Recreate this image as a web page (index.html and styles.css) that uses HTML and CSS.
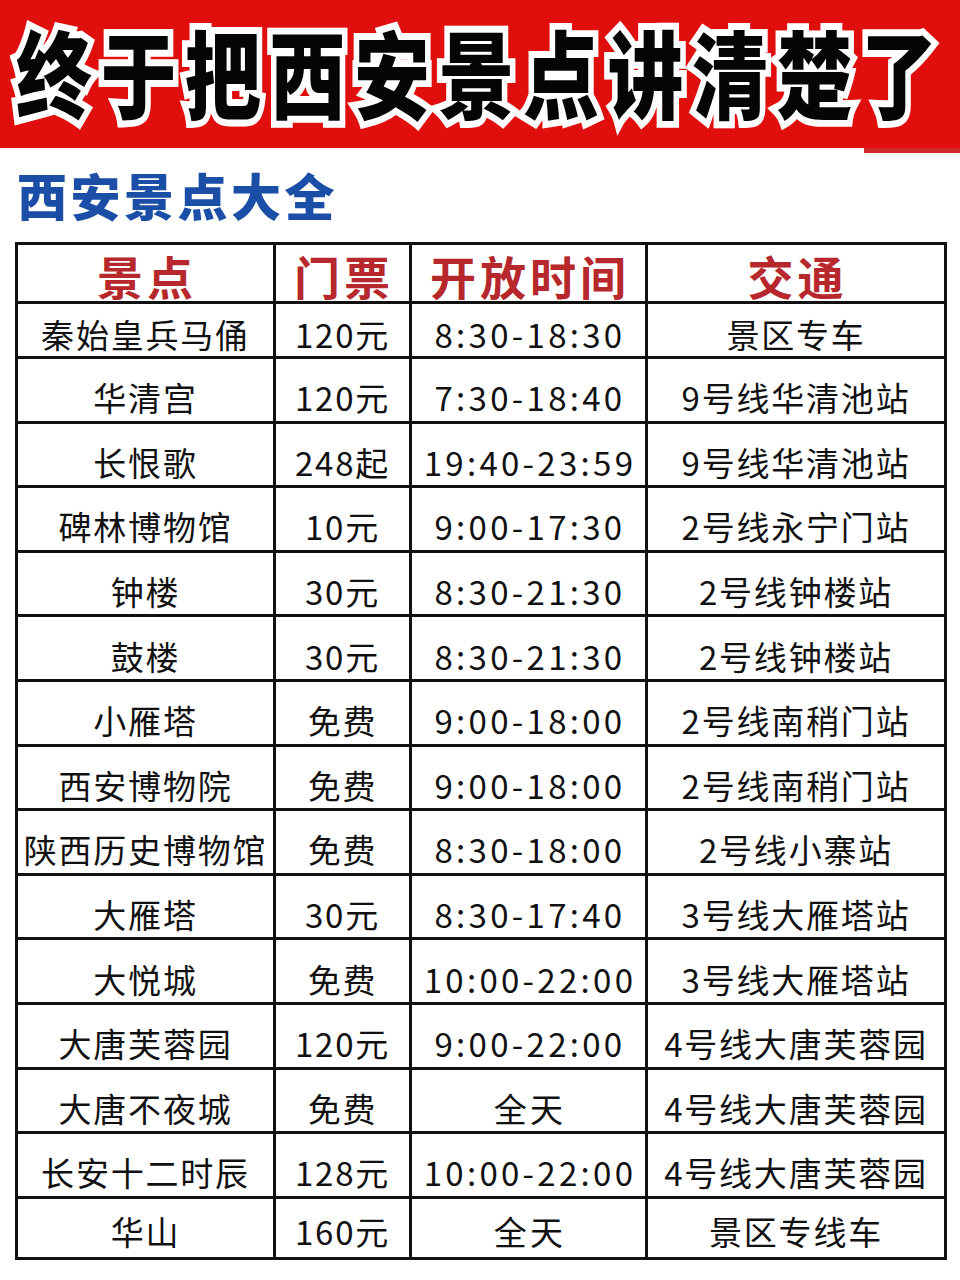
FILE: index.html
```html
<!DOCTYPE html>
<html lang="zh-CN">
<head>
<meta charset="utf-8">
<title>终于把西安景点讲清楚了</title>
<link rel="stylesheet" href="styles.css">
</head>
<body>
<header class="banner">
  <h1 class="title">终于把西安景点讲清楚了</h1>
</header>
<h2 class="subtitle">西安景点大全</h2>
<table class="spots">
  <colgroup>
    <col class="c1"><col class="c2"><col class="c3"><col class="c4">
  </colgroup>
  <thead>
    <tr class="head"><th>景点</th><th>门票</th><th>开放时间</th><th>交通</th></tr>
  </thead>
  <tbody>
    <tr class="first"><td>秦始皇兵马俑</td><td>120元</td><td class="time">8:30-18:30</td><td>景区专车</td></tr>
    <tr><td>华清宫</td><td>120元</td><td class="time">7:30-18:40</td><td>9号线华清池站</td></tr>
    <tr><td>长恨歌</td><td>248起</td><td class="time">19:40-23:59</td><td>9号线华清池站</td></tr>
    <tr><td>碑林博物馆</td><td>10元</td><td class="time">9:00-17:30</td><td>2号线永宁门站</td></tr>
    <tr><td>钟楼</td><td>30元</td><td class="time">8:30-21:30</td><td>2号线钟楼站</td></tr>
    <tr><td>鼓楼</td><td>30元</td><td class="time">8:30-21:30</td><td>2号线钟楼站</td></tr>
    <tr><td>小雁塔</td><td>免费</td><td class="time">9:00-18:00</td><td>2号线南稍门站</td></tr>
    <tr><td>西安博物院</td><td>免费</td><td class="time">9:00-18:00</td><td>2号线南稍门站</td></tr>
    <tr><td>陕西历史博物馆</td><td>免费</td><td class="time">8:30-18:00</td><td>2号线小寨站</td></tr>
    <tr><td>大雁塔</td><td>30元</td><td class="time">8:30-17:40</td><td>3号线大雁塔站</td></tr>
    <tr><td>大悦城</td><td>免费</td><td class="time">10:00-22:00</td><td>3号线大雁塔站</td></tr>
    <tr><td>大唐芙蓉园</td><td>120元</td><td class="time">9:00-22:00</td><td>4号线大唐芙蓉园</td></tr>
    <tr><td>大唐不夜城</td><td>免费</td><td class="time">全天</td><td>4号线大唐芙蓉园</td></tr>
    <tr><td>长安十二时辰</td><td>128元</td><td class="time">10:00-22:00</td><td>4号线大唐芙蓉园</td></tr>
    <tr class="last"><td>华山</td><td>160元</td><td class="time">全天</td><td>景区专线车</td></tr>
  </tbody>
</table>
</body>
</html>
```

FILE: styles.css
```css
html, body {
  margin: 0;
  padding: 0;
  background: #ffffff;
}

body {
  width: 960px;
  font-family: "Noto Sans CJK SC", "Noto Sans", sans-serif;
  color: #111111;
}

.banner {
  position: relative;
  height: 148px;
  background: #e10e0e;
  display: flex;
  align-items: center;
  padding-left: 16px;
  box-sizing: border-box;
}

.banner::after {
  content: "";
  position: absolute;
  right: 0;
  top: 148px;
  width: 96px;
  height: 5px;
  background: #cf2a2a;
}

.title {
  margin: -8px 0 0 0;
  font-family: "Noto Sans CJK SC", sans-serif;
  font-weight: 900;
  font-size: 76px;
  line-height: 1;
  letter-spacing: 8.5px;
  color: #050505;
  -webkit-text-stroke: 11px #ffffff;
  paint-order: stroke fill;
  white-space: nowrap;
  transform: scaleY(1.26);
  transform-origin: 50% 50%;
}

.subtitle {
  margin: 0;
  padding: 18px 0 0 17px;
  height: 76px;
  box-sizing: border-box;
  font-family: "Noto Sans CJK SC", sans-serif;
  font-weight: 900;
  font-size: 50px;
  line-height: 56px;
  letter-spacing: 3.5px;
  color: #1b4ea6;
}

.spots {
  margin: 18px 0 0 15px;
  width: 929px;
  border-collapse: collapse;
  table-layout: fixed;
  border: 3px solid #111111;
}

.c1 { width: 258px; }
.c2 { width: 136px; }
.c3 { width: 236px; }
.c4 { width: 299px; }

.spots th,
.spots td {
  border: 3px solid #111111;
  padding: 0;
  text-align: center;
  vertical-align: middle;
  white-space: nowrap;
}

.spots th {
  height: 52px;
  padding-top: 4px;
  padding-left: 3px;
  font-weight: 700;
  font-size: 46px;
  line-height: 50px;
  letter-spacing: 4px;
  color: #b7282c;
}

.spots td {
  height: 46.6px;
  padding-top: 15px;
  font-size: 33px;
  line-height: 40px;
  letter-spacing: 1.8px;
  font-weight: 400;
}

.spots td.time {
  letter-spacing: 3.3px;
  padding-left: 3px;
}

.spots tr.first td {
  height: 44px;
  padding-top: 8px;
}

.spots tr.last td {
  height: 51px;
  padding-top: 7px;
}
```
